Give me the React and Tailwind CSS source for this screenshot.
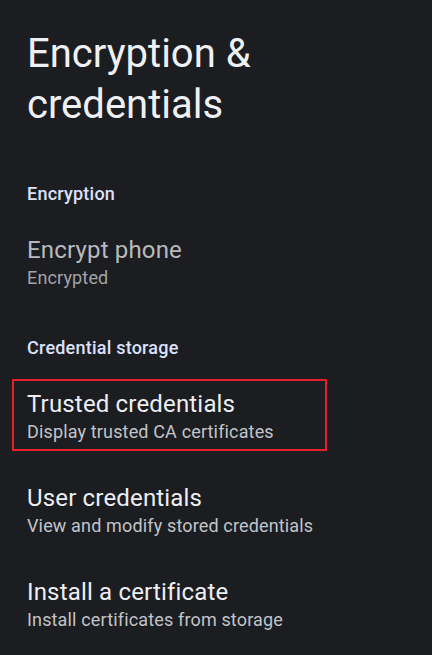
import React from 'react'

const sections = [
  {
    title: 'Encryption',
    items: [{ title: 'Encrypt phone', summary: 'Encrypted', disabled: true }],
  },
  {
    title: 'Credential storage',
    items: [
      { title: 'Trusted credentials', summary: 'Display trusted CA certificates', highlight: true },
      { title: 'User credentials', summary: 'View and modify stored credentials' },
      { title: 'Install a certificate', summary: 'Install certificates from storage' },
    ],
  },
]

function PrefItem({ item }) {
  return (
    <div className="relative px-[27px] py-[19px]">
      {/* Highlight box drawn over the row */}
      {item.highlight && (
        <div className="absolute left-[12px] top-[10px] w-[315px] h-[72px] border-2 border-[#e5202b] pointer-events-none" />
      )}
      <div
        className={
          'text-[24px] leading-[32px] tracking-[0.17px] ' +
          (item.disabled ? 'text-[#b9babd]' : 'text-[#eceef2]')
        }
      >
        {item.title}
      </div>
      <div
        className={
          'text-[18px] leading-[24px] tracking-[0.15px] ' +
          (item.disabled ? 'text-[#a3a4a8]' : 'text-[#c2c4c9]')
        }
      >
        {item.summary}
      </div>
    </div>
  )
}

export default function App() {
  return (
    <div
      className="w-[432px] h-[655px] overflow-hidden bg-[#1b1d21]"
      style={{ fontFamily: 'Roboto, "Noto Sans", sans-serif' }}
    >
      <h1 className="px-[27px] pt-[28px] text-[40px] leading-[51px] text-[#eef0f4] font-normal">
        Encryption &amp;
        <br />
        credentials
      </h1>
      <div className="mt-[52px]">
        {sections.map((section, i) => (
          <div key={section.title} className={i > 0 ? 'mt-[27px]' : ''}>
            <div className="px-[27px] mb-[9px] text-[18px] leading-[24px] font-medium tracking-[0.22px] text-[#dde0fa]">
              {section.title}
            </div>
            {section.items.map((item) => (
              <PrefItem key={item.title} item={item} />
            ))}
          </div>
        ))}
      </div>
    </div>
  )
}
